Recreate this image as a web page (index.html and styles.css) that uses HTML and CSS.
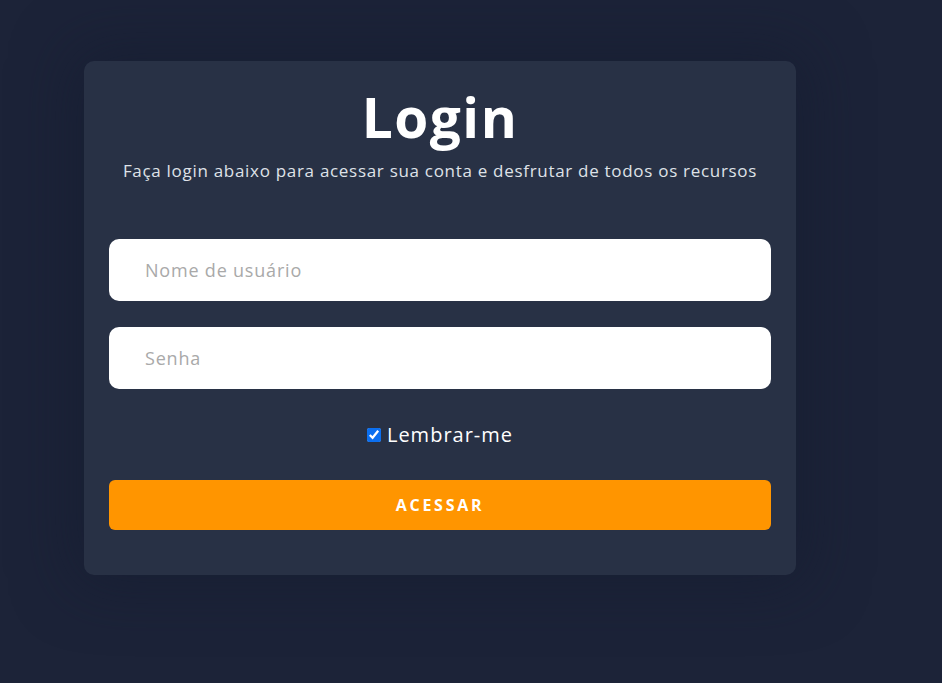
FILE: index.html
```html
<!DOCTYPE html>
<html lang="pt-BR">
<head>
<meta charset="utf-8">
<title>Login</title>
<link rel="stylesheet" href="styles.css">
</head>
<body>
<main class="page">
  <form class="card">
    <h1 class="title">Login</h1>
    <p class="subtitle">Faça login abaixo para acessar sua conta e desfrutar de todos os recursos</p>
    <div class="fields">
      <input class="field" type="text" placeholder="Nome de usuário">
      <input class="field" type="password" placeholder="Senha">
    </div>
    <label class="remember"><input class="check" type="checkbox" checked> Lembrar-me</label>
    <button class="submit" type="button">ACESSAR</button>
  </form>
</main>
</body>
</html>
```
FILE: styles.css
```css
html, body {
  margin: 0;
  padding: 0;
  background: #1c2338;
  height: 100%;
}
body {
  font-family: "Open Sans", "DejaVu Sans", sans-serif;
  color: #fff;
}
.page {
  padding: 61px 0 0 84px;
}
.card {
  width: 712px;
  box-sizing: border-box;
  background: #283145;
  border-radius: 10px;
  padding: 18px 25px 45px;
  display: flex;
  flex-direction: column;
  box-shadow: 0 0 60px 10px rgba(20, 28, 48, 0.55);
}
.title {
  margin: 0;
  text-align: center;
  font-size: 55px;
  font-weight: 700;
  line-height: 76px;
  letter-spacing: 1.5px;
}
.subtitle {
  margin: 4px 0 0;
  text-align: center;
  font-size: 17px;
  line-height: 24px;
  letter-spacing: 0.7px;
  color: #dfe2e8;
}
.fields {
  margin-top: 56px;
  display: flex;
  flex-direction: column;
  gap: 26px;
}
.field {
  height: 62px;
  box-sizing: border-box;
  border: none;
  border-radius: 10px;
  background: #fff;
  padding: 0 36px;
  font-family: inherit;
  font-size: 18px;
  letter-spacing: 0.8px;
  outline: none;
}
.field::placeholder {
  color: #a9a9a9;
}
.remember {
  margin-top: 34px;
  display: flex;
  justify-content: center;
  align-items: center;
  gap: 6px;
  font-size: 20px;
  line-height: 24px;
  letter-spacing: 1px;
}
.check {
  margin: 0;
  width: 14px;
  height: 14px;
  accent-color: #0b6ff0;
}
.submit {
  margin-top: 33px;
  height: 50px;
  border: none;
  border-radius: 6px;
  background: #ff9500;
  color: #fff;
  font-family: inherit;
  font-weight: 700;
  font-size: 16px;
  letter-spacing: 2.7px;
}
```
